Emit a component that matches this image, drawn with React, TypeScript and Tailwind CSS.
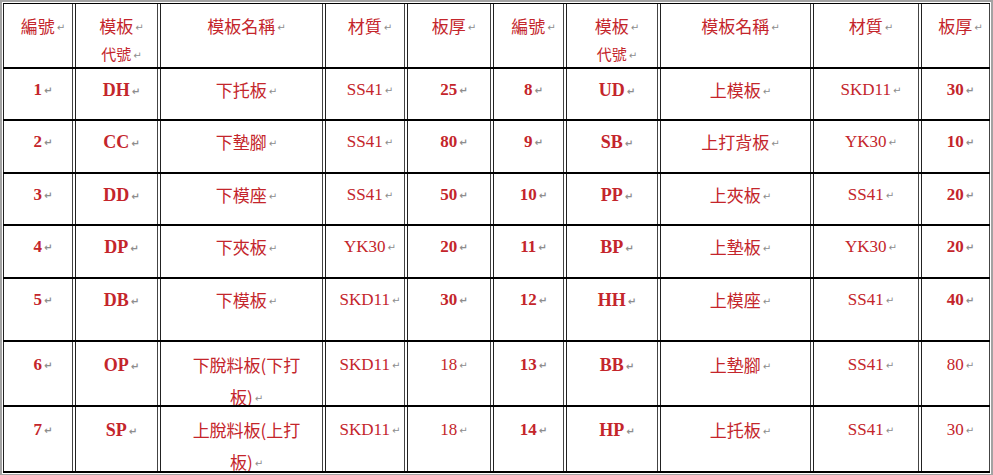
const RED = "text-[#c4252b]";
const CJK = "font-['Noto_Sans_CJK_TC','Noto_Sans_CJK_SC',sans-serif]";
const SERIF = "font-['Liberation_Serif','Noto_Sans_CJK_TC',serif]";

type Row = {
  no: string;
  code: string;
  name: string[];
  mat: string;
  thick: string;
};

const left: Row[] = [
  { no: "1", code: "DH", name: ["下托板"], mat: "SS41", thick: "25" },
  { no: "2", code: "CC", name: ["下墊腳"], mat: "SS41", thick: "80" },
  { no: "3", code: "DD", name: ["下模座"], mat: "SS41", thick: "50" },
  { no: "4", code: "DP", name: ["下夾板"], mat: "YK30", thick: "20" },
  { no: "5", code: "DB", name: ["下模板"], mat: "SKD11", thick: "30" },
  { no: "6", code: "OP", name: ["下脫料板(下打", "板)"], mat: "SKD11", thick: "18" },
  { no: "7", code: "SP", name: ["上脫料板(上打", "板)"], mat: "SKD11", thick: "18" },
];

const right: Row[] = [
  { no: "8", code: "UD", name: ["上模板"], mat: "SKD11", thick: "30" },
  { no: "9", code: "SB", name: ["上打背板"], mat: "YK30", thick: "10" },
  { no: "10", code: "PP", name: ["上夾板"], mat: "SS41", thick: "20" },
  { no: "11", code: "BP", name: ["上墊板"], mat: "YK30", thick: "20" },
  { no: "12", code: "HH", name: ["上模座"], mat: "SS41", thick: "40" },
  { no: "13", code: "BB", name: ["上墊腳"], mat: "SS41", thick: "80" },
  { no: "14", code: "HP", name: ["上托板"], mat: "SS41", thick: "30" },
];

const rowHeights = [
  "h-[52px]",
  "h-[53px]",
  "h-[52px]",
  "h-[53px]",
  "h-[63px]",
  "h-[65px]",
  "h-[66px]",
];

const grid =
  "grid grid-cols-[70px_83px_163px_80px_84px_71px_92px_151px_106px_69px] gap-x-[2px] border-b-2 border-black";

// word paragraph mark
function Mark() {
  return (
    <span className="ml-[2px] align-middle font-['DejaVu_Sans',sans-serif] text-[10px] text-[#8d8d8d]">
      ↵
    </span>
  );
}

function Cell({ children, pt = "pt-[5px]" }: { children: React.ReactNode; pt?: string }) {
  return (
    <div
      className={`h-full overflow-hidden border-x border-l-[#222] border-r-[#444] pl-[10px] text-center ${pt}`}
    >
      {children}
    </div>
  );
}

function Header() {
  const h = (t: string) => (
    <Cell pt="pt-[9px]">
      <div className={`text-[17px] leading-[26px] ${RED} ${CJK}`}>
        {t}
        <Mark />
      </div>
    </Cell>
  );
  const code = (
    <Cell pt="pt-[9px]">
      <div className={`text-[17px] leading-[26px] ${RED} ${CJK}`}>
        模板
        <Mark />
      </div>
      <div className={`text-[15px] leading-[26px] ${RED} ${CJK}`}>
        代號
        <Mark />
      </div>
    </Cell>
  );
  return (
    <div className={`${grid} h-[66px] border-t border-t-black`}>
      {h("編號")}
      {code}
      {h("模板名稱")}
      {h("材質")}
      {h("板厚")}
      {h("編號")}
      {code}
      {h("模板名稱")}
      {h("材質")}
      {h("板厚")}
    </div>
  );
}

function Half({ r, tall }: { r: Row; tall: boolean }) {
  const pt = tall ? "pt-[7px]" : "pt-[5px]";
  return (
    <>
      <Cell pt={pt}>
        <div className={`text-[17px] font-bold leading-[32px] ${RED} ${SERIF}`}>
          {r.no}
          <Mark />
        </div>
      </Cell>
      <Cell pt={pt}>
        <div className={`text-[18px] font-bold leading-[32px] ${RED} ${SERIF}`}>
          {r.code}
          <Mark />
        </div>
      </Cell>
      <Cell pt={pt}>
        {r.name.map((n, i) => (
          <div key={i} className={`text-[17px] leading-[32px] ${RED} ${CJK}`}>
            {n}
            {i === r.name.length - 1 && <Mark />}
          </div>
        ))}
      </Cell>
      <Cell pt={pt}>
        <div className={`text-[17px] leading-[32px] ${RED} ${SERIF}`}>
          {r.mat}
          <Mark />
        </div>
      </Cell>
      <Cell pt={pt}>
        <div
          className={`text-[17px] leading-[32px] ${tall ? "font-normal" : "font-bold"} ${RED} ${SERIF}`}
        >
          {r.thick}
          <Mark />
        </div>
      </Cell>
    </>
  );
}

export default function App() {
  return (
    <div className="h-[475px] w-[993px] overflow-hidden bg-white">
      <div className="border-2 border-[#a3a3a3] bg-white p-[1px]">
        <Header />
        {left.map((r, i) => (
          <div key={r.no} className={`${grid} ${rowHeights[i]}`}>
            <Half r={r} tall={i >= 5} />
            <Half r={right[i]} tall={i >= 5} />
          </div>
        ))}
      </div>
    </div>
  );
}
